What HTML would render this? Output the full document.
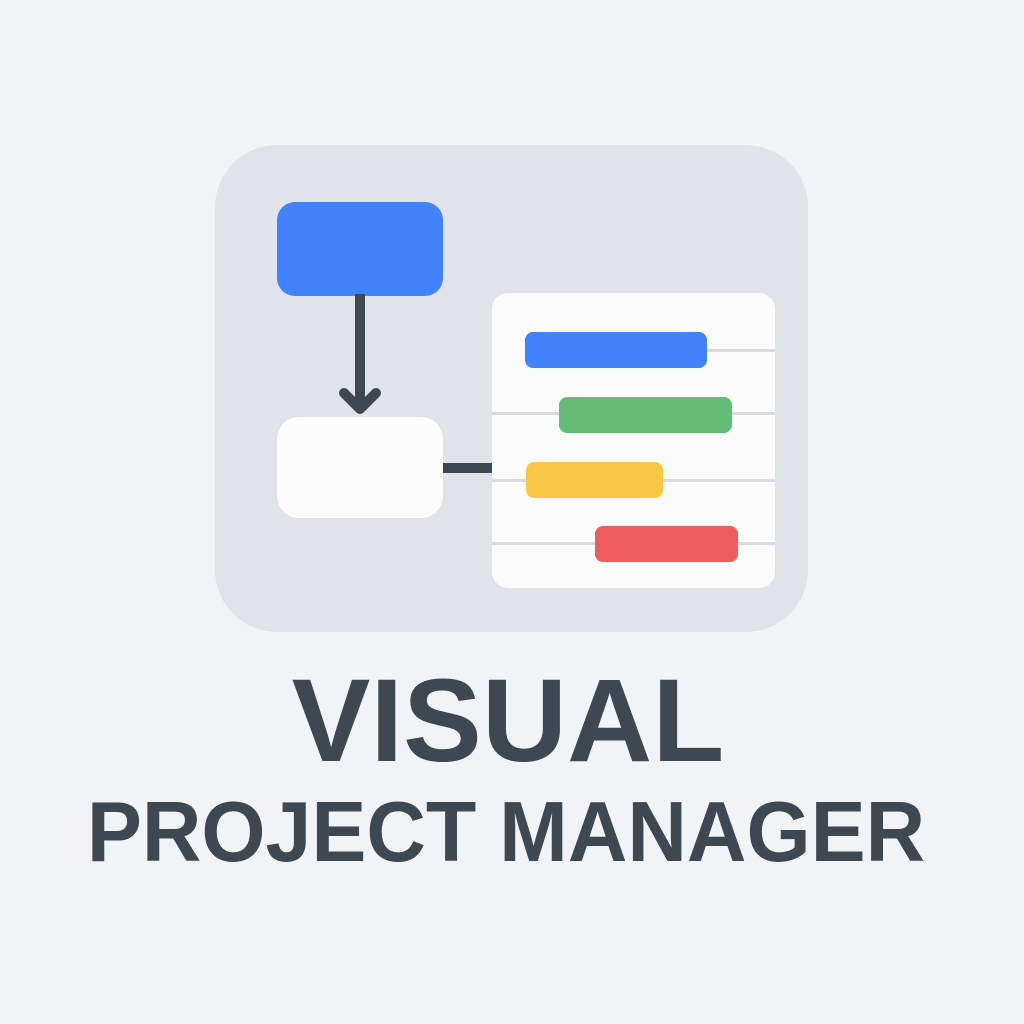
<!DOCTYPE html>
<html><head><style>
html,body{margin:0;padding:0;}
body{width:1024px;height:1024px;background:#f2f3f7;position:relative;overflow:hidden;font-family:"Liberation Sans",sans-serif;}
.a{position:absolute;}
.t{position:absolute;left:0;width:1024px;text-align:center;color:#3d4853;font-weight:bold;white-space:nowrap;}
</style></head><body>
<div class="a" style="left:215px;top:145px;width:593px;height:487px;background:#e0e3e9;border-radius:62px;"></div>
<div class="a" style="left:277px;top:202px;width:166px;height:94px;background:#4282fc;border-radius:18px;"></div>
<svg class="a" style="left:0;top:0" width="1024" height="1024">
<line x1="360" y1="294" x2="360" y2="405" stroke="#3d4853" stroke-width="10"/>
<polyline points="344,393 360,409 376,393" fill="none" stroke="#3d4853" stroke-width="10" stroke-linecap="round" stroke-linejoin="round"/>
<rect x="440" y="463" width="55" height="10" fill="#3d4853"/>
</svg>
<div class="a" style="left:277px;top:417px;width:166px;height:101px;background:#fcfcfc;border-radius:22px;"></div>
<div class="a" style="left:492px;top:293px;width:283px;height:295px;background:#fbfbfb;border-radius:16px;overflow:hidden;">
  <div class="a" style="left:210px;top:56px;width:80px;height:3px;background:#d8dbe3"></div>
  <div class="a" style="left:0;top:119px;width:290px;height:3px;background:#d8dbe3"></div>
  <div class="a" style="left:0;top:186px;width:290px;height:3px;background:#d8dbe3"></div>
  <div class="a" style="left:0;top:249px;width:290px;height:3px;background:#d8dbe3"></div>
  <div class="a" style="left:33px;top:39px;width:182px;height:36px;background:#4282fc;border-radius:8px"></div>
  <div class="a" style="left:67px;top:104px;width:173px;height:36px;background:#64bc75;border-radius:8px"></div>
  <div class="a" style="left:34px;top:169px;width:137px;height:36px;background:#f8c745;border-radius:8px"></div>
  <div class="a" style="left:103px;top:233px;width:143px;height:36px;background:#f05c5a;border-radius:8px"></div>
</div>
<div class="t" style="top:656px;font-size:118px;line-height:130px;left:-4px;">VISUAL</div>
<div class="t" style="top:785px;font-size:85px;line-height:95px;left:-6px;transform:scaleX(0.97);">PROJECT MANAGER</div>
</body></html>
